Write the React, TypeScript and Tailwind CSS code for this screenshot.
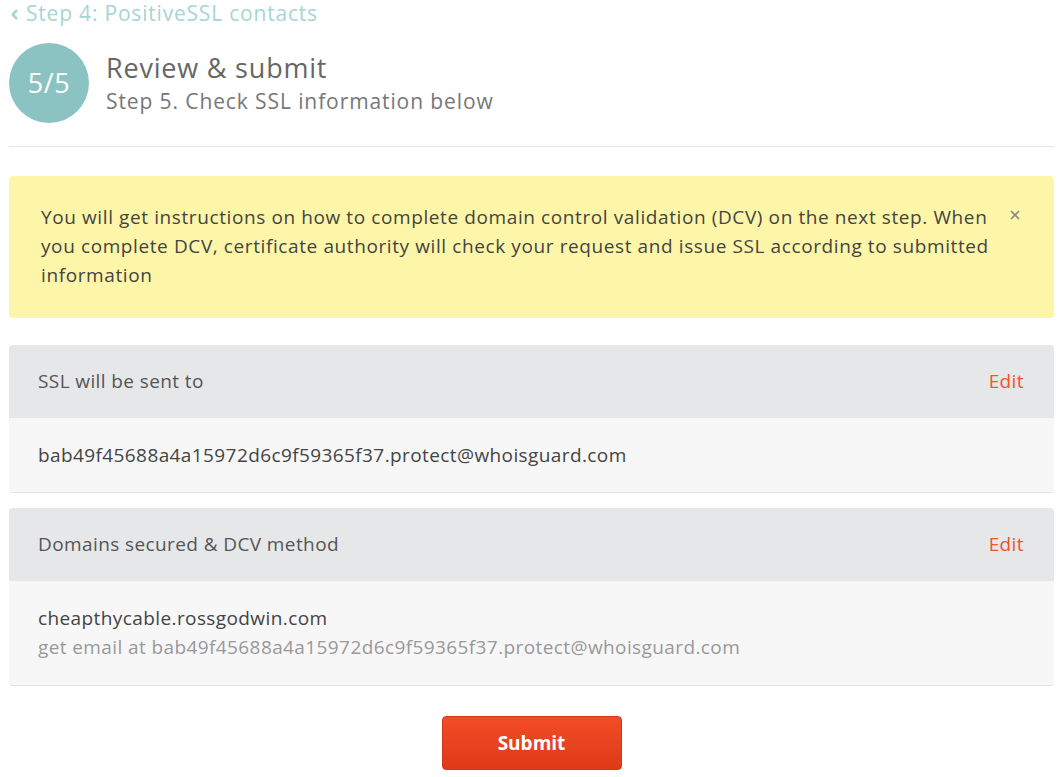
import { ChevronLeft, X } from 'lucide-react';

function Panel({ title, children }: { title: string; children: React.ReactNode }) {
  return (
    <div className="rounded-[4px] overflow-hidden border-b border-[#e2e2e2]">
      <div className="flex items-center justify-between bg-[#e6e7e9] h-[73px] pl-[29px] pr-[30px]">
        <span className="text-[19px] tracking-[0.4px] text-[#555]">{title}</span>
        <a className="text-[19px] tracking-[0.4px] text-[#f0542d] cursor-pointer">Edit</a>
      </div>
      <div className="bg-[#f7f7f7] px-[29px]">{children}</div>
    </div>
  );
}

export default function App() {
  return (
    <div className="w-[1062px] h-[777px] bg-white pl-[9px] pr-[8px] font-['Open_Sans','Noto_Sans',sans-serif] overflow-hidden">
      {/* back link */}
      <a className="flex items-center gap-[4px] h-[28px] text-[21px] tracking-[0.8px] text-[#a6d5d4] cursor-pointer">
        <ChevronLeft className="w-[15px] h-[15px] -ml-[2px]" strokeWidth={4} />
        <span>Step 4: PositiveSSL contacts</span>
      </a>

      {/* step header */}
      <div className="flex items-center gap-[17px] mt-[15px] pb-[23px] border-b border-[#e5e5e5]">
        <div className="w-[80px] h-[80px] rounded-full bg-[#8bc3c2] flex items-center justify-center text-white text-[27px] tracking-[0.5px]">
          5/5
        </div>
        <div className="flex flex-col">
          <h1 className="text-[27px] leading-[34px] tracking-[0.8px] text-[#666] -mt-[1px]">Review &amp; submit</h1>
          <p className="text-[21px] leading-[28px] tracking-[0.9px] text-[#777] mt-[2px]">Step 5. Check SSL information below</p>
        </div>
      </div>

      {/* info alert */}
      <div className="mt-[29px] bg-[#fdf6a9] rounded-[4px] pl-[32px] pr-[30px] pt-[27px] pb-[28px] flex items-start justify-between">
        <p className="w-[955px] text-[19px] leading-[29px] tracking-[0.6px] font-medium text-[#444]">
          You will get instructions on how to complete domain control validation (DCV) on the next step. When
          you complete DCV, certificate authority will check your request and issue SSL according to submitted
          information
        </p>
        <X className="w-[14px] h-[14px] text-[#8a8a8a] mt-[5px] mr-[2px] shrink-0" strokeWidth={3} />
      </div>

      <div className="mt-[27px] flex flex-col gap-[15px]">
        <Panel title="SSL will be sent to">
          <div className="h-[74px] flex items-center text-[19px] tracking-[0.4px] text-[#444]">
            bab49f45688a4a15972d6c9f59365f37.protect@whoisguard.com
          </div>
        </Panel>
        <Panel title="Domains secured &amp; DCV method">
          <div className="h-[104px] flex flex-col justify-center text-[19px] tracking-[0.4px] leading-[29px]">
            <span className="text-[#444]">cheapthycable.rossgodwin.com</span>
            <span className="text-[#999]">get email at bab49f45688a4a15972d6c9f59365f37.protect@whoisguard.com</span>
          </div>
        </Panel>
      </div>

      <div className="flex justify-center mt-[30px]">
        <button className="w-[180px] h-[54px] rounded-[4px] bg-gradient-to-b from-[#f24c25] to-[#de3a19] border border-[#d0381a] text-white font-bold text-[19px]">
          Submit
        </button>
      </div>
    </div>
  );
}
